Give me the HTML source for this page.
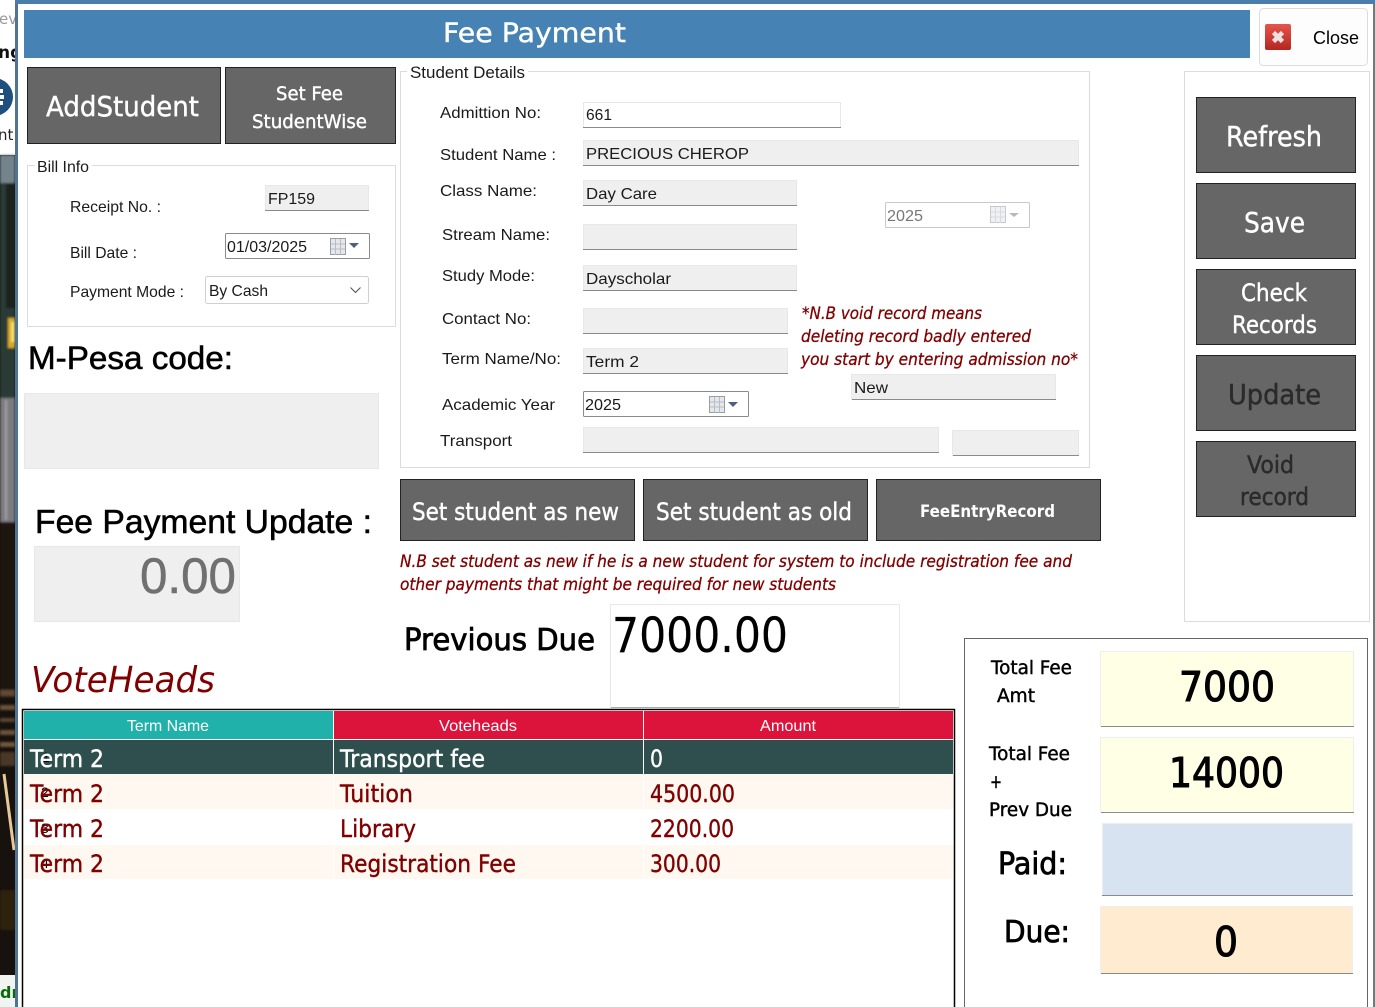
<!DOCTYPE html>
<html lang="en"><head><meta charset="utf-8"><title>Fee Payment</title>
<style>
html,body{margin:0;padding:0;background:#fff;width:1375px;height:1007px;overflow:hidden}
svg{display:block}
text{white-space:pre}
.a{font-family:"Liberation Sans",sans-serif;font-size:16px;fill:#1a1a1a}
.s{font-family:"DejaVu Sans",sans-serif}
.w{fill:#fff}
.d{fill:#2b2b2b}
.k{fill:#000}
.r{fill:#800000}
.s.w{stroke:#fff;stroke-width:.4}
.s.d{stroke:#2b2b2b;stroke-width:.5}
.s.k{stroke:#000;stroke-width:.45}
.a.hv{stroke:#000;stroke-width:.55}
.n{font-family:"DejaVu Sans",sans-serif;font-style:italic;font-size:17px;fill:#800000;stroke:#800000;stroke-width:.3}
.t{font-family:"DejaVu Sans",sans-serif;font-size:24px;fill:#800000;stroke:#800000;stroke-width:.4}
.t.w{fill:#fff;stroke:#fff}
.b{fill:#666;stroke:#222;stroke-width:1}
.f{fill:#efefef;stroke:#e8e8e8}
.g{fill:none;stroke:#dcdcdc}
.u{fill:#8a8a8a}
</style></head><body>
<svg xmlns="http://www.w3.org/2000/svg" width="1375" height="1007" viewBox="0 0 1375 1007">
<defs>
<filter id="bl"><feGaussianBlur stdDeviation="1"/></filter>
<clipPath id="strip"><rect x="0" y="0" width="15" height="1007"/></clipPath>
<linearGradient id="red" x1="0" y1="0" x2="0" y2="1"><stop offset="0" stop-color="#e4564c"/><stop offset="1" stop-color="#b42620"/></linearGradient>
<g id="cal">
<rect x="0.5" y="0.5" width="15" height="16" fill="#e4e7ec" stroke="#9a9da3"/>
<path d="M5.5 1V17M10.5 1V17M1 6H15M1 11H15" stroke="#b9bcc2" stroke-width="1" fill="none"/>
</g>
</defs>
<rect width="1375" height="1007" fill="#fff"/>

<!-- background strip at left -->
<g clip-path="url(#strip)">
<rect x="0" y="155" width="15" height="820" fill="#17120d"/>
<g filter="url(#bl)">
<rect x="0" y="155" width="15" height="28" fill="#73848c"/>
<rect x="0" y="183" width="15" height="215" fill="#2c3a36"/>
<rect x="6" y="183" width="9" height="125" fill="#1a211c"/>
<rect x="8" y="318" width="7" height="30" fill="#d8a92c"/>
<rect x="11" y="322" width="4" height="20" fill="#f8df6a"/>
<rect x="0" y="398" width="15" height="124" fill="#7b7b80"/>
<rect x="5" y="400" width="2" height="120" fill="#a2a2a6"/>
<rect x="0" y="522" width="15" height="178" fill="#1d1710"/>
<rect x="0" y="690" width="15" height="6" fill="#604a30"/>
<rect x="0" y="705" width="15" height="5" fill="#6a5238"/>
<rect x="0" y="718" width="15" height="4" fill="#5a442e"/>
<rect x="0" y="730" width="15" height="5" fill="#6a5238"/>
<rect x="0" y="742" width="15" height="5" fill="#70583a"/>
<rect x="0" y="752" width="15" height="14" fill="#4a3826"/>
<rect x="0" y="890" width="15" height="40" fill="#2e2010"/>
</g>
<path d="M4 774L14 850" stroke="#e8c898" stroke-width="3" fill="none"/>
<rect x="0" y="975" width="15" height="32" fill="#f2f4f2"/>
<text x="0" y="998" class="s" style="font-size:16px;font-weight:700;fill:#0a6a0a">dr</text>
<text x="-1" y="24" class="s" style="font-size:15px;fill:#9a9a9a">ev</text>
<text x="-2" y="58" class="s" style="font-size:17px;font-weight:700;fill:#111">ng</text>
<circle cx="-6" cy="97" r="19" fill="#1e4f7e"/>
<rect x="0" y="89" width="3" height="4" fill="#fff"/><rect x="0" y="95" width="4" height="4" fill="#fff"/><rect x="0" y="101" width="3" height="4" fill="#fff"/>
<text x="-2" y="140" class="s" style="font-size:15px;fill:#222">nt</text>
</g>
<rect x="15" y="0" width="3" height="1007" fill="#4f7496"/>
<rect x="15" y="0" width="1360" height="4" fill="#4a7dab"/>
<rect x="1373" y="4" width="2" height="1003" fill="#777"/>

<!-- header -->
<rect x="24" y="10" width="1226" height="48" fill="#4682b4"/>
<text x="443" y="42" class="s w" style="font-size:27px" textLength="183" lengthAdjust="spacingAndGlyphs">Fee Payment</text>
<rect x="1259.5" y="8.5" width="108" height="57" rx="4" fill="#fdfdfd" stroke="#dcdcdc"/>
<rect x="1265" y="24" width="26" height="26" rx="2" fill="url(#red)"/>
<path d="M1273.5 32.5L1282.5 41.5M1282.5 32.5L1273.5 41.5" stroke="#f0e2e2" stroke-width="4.5"/>
<text x="1313" y="44" class="a k" style="font-size:18px" textLength="46" lengthAdjust="spacingAndGlyphs">Close</text>

<!-- top-left buttons -->
<rect x="27.5" y="67.5" width="193" height="76" class="b"/>
<text x="46" y="116" class="s w" style="font-size:28px" textLength="153" lengthAdjust="spacingAndGlyphs">AddStudent</text>
<rect x="225.5" y="67.5" width="170" height="76" class="b"/>
<text x="276" y="100" class="s w" style="font-size:19px" textLength="67" lengthAdjust="spacingAndGlyphs">Set Fee</text>
<text x="252" y="128" class="s w" style="font-size:19px" textLength="115" lengthAdjust="spacingAndGlyphs">StudentWise</text>

<!-- Bill info -->
<path d="M35 165.5H27.5V326.5H395.5V165.5H92" class="g"/>
<text x="37" y="172" class="a" textLength="52" lengthAdjust="spacingAndGlyphs">Bill Info</text>
<text x="70" y="212" class="a" textLength="91" lengthAdjust="spacingAndGlyphs">Receipt No. :</text>
<text x="70" y="258" class="a" textLength="67" lengthAdjust="spacingAndGlyphs">Bill Date :</text>
<text x="70" y="297" class="a" textLength="114" lengthAdjust="spacingAndGlyphs">Payment Mode :</text>
<rect x="265.5" y="185.5" width="103" height="25" class="f"/><rect x="265" y="210" width="104" height="1" class="u"/>
<text x="268" y="204" class="a" textLength="47" lengthAdjust="spacingAndGlyphs">FP159</text>
<rect x="225.5" y="233.5" width="144" height="25" rx="1" fill="#fff" stroke="#8a8a8a"/>
<text x="227" y="252" class="a" textLength="80" lengthAdjust="spacingAndGlyphs">01/03/2025</text>
<use href="#cal" x="330" y="238"/>
<path d="M349 243H359L354 248Z" fill="#4d6082"/>
<rect x="205.5" y="276.5" width="163" height="27" rx="2" fill="#fff" stroke="#cfcfcf"/>
<text x="209" y="296" class="a" textLength="59" lengthAdjust="spacingAndGlyphs">By Cash</text>
<path d="M350.5 287.5L355.5 292.5L360.5 287.5" fill="none" stroke="#555" stroke-width="1.1"/>

<!-- M-Pesa / Fee Payment Update -->
<text x="28" y="369" class="a k hv" style="font-size:32px" textLength="205" lengthAdjust="spacingAndGlyphs">M-Pesa code:</text>
<rect x="24.5" y="393.5" width="354" height="75" class="f"/>
<text x="35" y="533" class="a k hv" style="font-size:33px" textLength="337" lengthAdjust="spacingAndGlyphs">Fee Payment Update :</text>
<rect x="34.5" y="546.5" width="205" height="75" class="f"/>
<text x="140" y="593" class="a" style="font-size:50px;fill:#707070;stroke:#707070;stroke-width:.5" textLength="96" lengthAdjust="spacingAndGlyphs">0.00</text>
<text x="31" y="692" class="s r" style="font-size:36px;font-style:italic" textLength="184" lengthAdjust="spacingAndGlyphs">VoteHeads</text>

<!-- Student details -->
<path d="M407 71.5H400.5V467.5H1089.5V71.5H528" class="g"/>
<text x="410" y="78" class="a" style="font-size:17px" textLength="115" lengthAdjust="spacingAndGlyphs">Student Details</text>
<text x="440" y="118" class="a" textLength="101" lengthAdjust="spacingAndGlyphs">Admittion No:</text>
<text x="440" y="160" class="a" textLength="116" lengthAdjust="spacingAndGlyphs">Student Name :</text>
<text x="440" y="196" class="a" textLength="97" lengthAdjust="spacingAndGlyphs">Class Name:</text>
<text x="442" y="240" class="a" textLength="108" lengthAdjust="spacingAndGlyphs">Stream Name:</text>
<text x="442" y="281" class="a" textLength="93" lengthAdjust="spacingAndGlyphs">Study Mode:</text>
<text x="442" y="324" class="a" textLength="89" lengthAdjust="spacingAndGlyphs">Contact No:</text>
<text x="442" y="364" class="a" textLength="119" lengthAdjust="spacingAndGlyphs">Term Name/No:</text>
<text x="442" y="410" class="a" textLength="113" lengthAdjust="spacingAndGlyphs">Academic Year</text>
<text x="440" y="446" class="a" textLength="72" lengthAdjust="spacingAndGlyphs">Transport</text>

<rect x="583.5" y="102.5" width="257" height="25" fill="#fff" stroke="#e8e8e8"/><rect x="583" y="127" width="258" height="1" class="u"/>
<text x="586" y="120" class="a" textLength="26" lengthAdjust="spacingAndGlyphs">661</text>
<rect x="583.5" y="140.5" width="495" height="25" class="f"/><rect x="583" y="165" width="496" height="1" class="u"/>
<text x="586" y="159" class="a" textLength="163" lengthAdjust="spacingAndGlyphs">PRECIOUS CHEROP</text>
<rect x="583.5" y="180.5" width="213" height="25" class="f"/><rect x="583" y="205" width="214" height="1" class="u"/>
<text x="586" y="199" class="a" textLength="71" lengthAdjust="spacingAndGlyphs">Day Care</text>
<rect x="583.5" y="224.5" width="213" height="25" class="f"/><rect x="583" y="249" width="214" height="1" class="u"/>
<rect x="583.5" y="265.5" width="213" height="25" class="f"/><rect x="583" y="290" width="214" height="1" class="u"/>
<text x="586" y="284" class="a" textLength="85" lengthAdjust="spacingAndGlyphs">Dayscholar</text>
<rect x="583.5" y="308.5" width="204" height="25" class="f"/><rect x="583" y="333" width="205" height="1" class="u"/>
<rect x="583.5" y="348.5" width="204" height="25" class="f"/><rect x="583" y="373" width="205" height="1" class="u"/>
<text x="586" y="367" class="a" textLength="53" lengthAdjust="spacingAndGlyphs">Term 2</text>
<rect x="583.5" y="391.5" width="165" height="25" rx="1" fill="#fff" stroke="#8a8a8a"/>
<text x="585" y="410" class="a" textLength="36" lengthAdjust="spacingAndGlyphs">2025</text>
<use href="#cal" x="709" y="396"/>
<path d="M728 402H738L733 407Z" fill="#4d6082"/>
<rect x="583.5" y="427.5" width="355" height="25" class="f"/><rect x="583" y="452" width="356" height="1" class="u"/>
<rect x="952.5" y="430.5" width="126" height="25" class="f"/><rect x="953" y="455" width="126" height="1" class="u"/>
<rect x="851.5" y="374.5" width="204" height="25" class="f"/><rect x="852" y="399" width="204" height="1" class="u"/>
<text x="854" y="393" class="a" textLength="34" lengthAdjust="spacingAndGlyphs">New</text>
<rect x="885.5" y="202.5" width="144" height="25" rx="1" fill="#fff" stroke="#c8c8c8"/>
<text x="887" y="221" class="a" style="fill:#777" textLength="36" lengthAdjust="spacingAndGlyphs">2025</text>
<g opacity=".55"><use href="#cal" x="990" y="206"/></g>
<path d="M1009 213H1019L1014 217Z" fill="#b4b8c0"/>

<text x="802" y="319" class="n" textLength="180" lengthAdjust="spacingAndGlyphs">*N.B void record means</text>
<text x="801" y="342" class="n" textLength="230" lengthAdjust="spacingAndGlyphs">deleting record badly entered</text>
<text x="801" y="365" class="n" textLength="277" lengthAdjust="spacingAndGlyphs">you start by entering admission no*</text>

<!-- middle buttons -->
<rect x="400.5" y="479.5" width="234" height="61" class="b"/>
<text x="412" y="520" class="s w" style="font-size:24px" textLength="207" lengthAdjust="spacingAndGlyphs">Set student as new</text>
<rect x="643.5" y="479.5" width="224" height="61" class="b"/>
<text x="656" y="520" class="s w" style="font-size:24px" textLength="196" lengthAdjust="spacingAndGlyphs">Set student as old</text>
<rect x="876.5" y="479.5" width="224" height="61" class="b"/>
<text x="920" y="517" class="s" style="font-size:17px;font-weight:700;fill:#fff" textLength="135" lengthAdjust="spacingAndGlyphs">FeeEntryRecord</text>

<text x="400" y="567" class="n" textLength="672" lengthAdjust="spacingAndGlyphs">N.B set student as new if he is a new student for system to include registration fee and</text>
<text x="400" y="590" class="n" textLength="436" lengthAdjust="spacingAndGlyphs">other payments that might be required for new students</text>

<text x="404" y="650" class="s k" style="font-size:30px;stroke-width:.8" textLength="191" lengthAdjust="spacingAndGlyphs">Previous Due</text>
<rect x="610.5" y="604.5" width="289" height="103" fill="#fff" stroke="#e8e8e8"/><rect x="611" y="707" width="288" height="1" fill="#aaa"/>
<text x="612" y="652" class="s k" style="font-size:48px;stroke-width:.2" textLength="176" lengthAdjust="spacingAndGlyphs">7000.00</text>

<!-- Right buttons -->
<rect x="1184.5" y="71.5" width="185" height="550" class="g"/>
<rect x="1196.5" y="97.5" width="159" height="75" class="b"/>
<text x="1226" y="146" class="s w" style="font-size:28px" textLength="96" lengthAdjust="spacingAndGlyphs">Refresh</text>
<rect x="1196.5" y="183.5" width="159" height="75" class="b"/>
<text x="1244" y="232" class="s w" style="font-size:28px" textLength="61" lengthAdjust="spacingAndGlyphs">Save</text>
<rect x="1196.5" y="269.5" width="159" height="75" class="b"/>
<text x="1241" y="301" class="s w" style="font-size:24px" textLength="66" lengthAdjust="spacingAndGlyphs">Check</text>
<text x="1232" y="333" class="s w" style="font-size:24px" textLength="85" lengthAdjust="spacingAndGlyphs">Records</text>
<rect x="1196.5" y="355.5" width="159" height="75" class="b"/>
<text x="1228" y="404" class="s d" style="font-size:28px" textLength="93" lengthAdjust="spacingAndGlyphs">Update</text>
<rect x="1196.5" y="441.5" width="159" height="75" class="b"/>
<text x="1247" y="473" class="s d" style="font-size:24px" textLength="47" lengthAdjust="spacingAndGlyphs">Void</text>
<text x="1240" y="505" class="s d" style="font-size:24px" textLength="69" lengthAdjust="spacingAndGlyphs">record</text>

<!-- bottom right -->
<path d="M964.5 1007V638.5H1367.5V1007" fill="none" stroke="#666"/>
<text x="991" y="674" class="s k" style="font-size:19px" textLength="81" lengthAdjust="spacingAndGlyphs">Total Fee</text>
<text x="997" y="702" class="s k" style="font-size:19px" textLength="38" lengthAdjust="spacingAndGlyphs">Amt</text>
<text x="989" y="760" class="s k" style="font-size:19px" textLength="81" lengthAdjust="spacingAndGlyphs">Total Fee</text>
<text x="990" y="788" class="s k" style="font-size:19px" textLength="12" lengthAdjust="spacingAndGlyphs">+</text>
<text x="989" y="816" class="s k" style="font-size:19px" textLength="83" lengthAdjust="spacingAndGlyphs">Prev Due</text>
<text x="998" y="874" class="s k" style="font-size:30px;stroke-width:.8" textLength="69" lengthAdjust="spacingAndGlyphs">Paid:</text>
<text x="1004" y="942" class="s k" style="font-size:30px;stroke-width:.8" textLength="66" lengthAdjust="spacingAndGlyphs">Due:</text>
<rect x="1100.5" y="651.5" width="253" height="75" fill="#ffffe6" stroke="#eeeeee"/><rect x="1101" y="726" width="253" height="1" class="u"/>
<rect x="1100.5" y="737.5" width="253" height="75" fill="#ffffe6" stroke="#eeeeee"/><rect x="1101" y="812" width="253" height="1" class="u"/>
<rect x="1102.5" y="823.5" width="250" height="72" fill="#d7e3f0" stroke="#eeeeee"/><rect x="1102" y="895" width="251" height="1" class="u"/>
<rect x="1100.5" y="906.5" width="252" height="67" fill="#ffebd0" stroke="#eeeeee"/><rect x="1101" y="973" width="252" height="1" class="u"/>
<text x="1179" y="701" class="s k" style="font-size:41px;stroke-width:1.1" textLength="96" lengthAdjust="spacingAndGlyphs">7000</text>
<text x="1169" y="787" class="s k" style="font-size:41px;stroke-width:1.1" textLength="115" lengthAdjust="spacingAndGlyphs">14000</text>
<text x="1214" y="956" class="s k" style="font-size:41px;stroke-width:1.1" textLength="24" lengthAdjust="spacingAndGlyphs">0</text>

<!-- table -->
<path d="M22.5 1007V709.5H954.5V1007" fill="#fff" stroke="#000" stroke-width="1.5"/>
<rect x="24" y="711" width="309" height="28" fill="#20b2aa"/>
<rect x="334" y="711" width="309" height="28" fill="#dc143c"/>
<rect x="644" y="711" width="309" height="28" fill="#dc143c"/>
<text x="127" y="731" class="a w" textLength="82" lengthAdjust="spacingAndGlyphs">Term Name</text>
<text x="439" y="731" class="a w" textLength="78" lengthAdjust="spacingAndGlyphs">Voteheads</text>
<text x="760" y="731" class="a w" textLength="56" lengthAdjust="spacingAndGlyphs">Amount</text>
<rect x="24" y="740" width="309" height="34" fill="#2f4f4f"/>
<rect x="334" y="740" width="309" height="34" fill="#2f4f4f"/>
<rect x="644" y="740" width="309" height="34" fill="#2f4f4f"/>
<rect x="24" y="774" width="929" height="35" fill="#fff8f0"/>
<rect x="24" y="845" width="929" height="34" fill="#fff8f0"/>
<path d="M333.5 774V879M643.5 774V879" stroke="#fff" fill="none"/>

<text x="42" y="762" class="a k" style="font-size:14px">1</text>
<text x="41" y="797" class="a k" style="font-size:14px">2</text>
<text x="41" y="833" class="a k" style="font-size:14px">3</text>
<text x="41" y="868" class="a k" style="font-size:14px">4</text>

<text x="30" y="767" class="t w" textLength="74" lengthAdjust="spacingAndGlyphs">Term 2</text>
<text x="340" y="767" class="t w" textLength="145" lengthAdjust="spacingAndGlyphs">Transport fee</text>
<text x="650" y="767" class="t w" textLength="13" lengthAdjust="spacingAndGlyphs">0</text>
<text x="30" y="802" class="t" textLength="74" lengthAdjust="spacingAndGlyphs">Term 2</text>
<text x="340" y="802" class="t" textLength="73" lengthAdjust="spacingAndGlyphs">Tuition</text>
<text x="650" y="802" class="t" textLength="85" lengthAdjust="spacingAndGlyphs">4500.00</text>
<text x="30" y="837" class="t" textLength="74" lengthAdjust="spacingAndGlyphs">Term 2</text>
<text x="340" y="837" class="t" textLength="76" lengthAdjust="spacingAndGlyphs">Library</text>
<text x="650" y="837" class="t" textLength="84" lengthAdjust="spacingAndGlyphs">2200.00</text>
<text x="30" y="872" class="t" textLength="74" lengthAdjust="spacingAndGlyphs">Term 2</text>
<text x="340" y="872" class="t" textLength="176" lengthAdjust="spacingAndGlyphs">Registration Fee</text>
<text x="650" y="872" class="t" textLength="71" lengthAdjust="spacingAndGlyphs">300.00</text>
</svg>
</body></html>
